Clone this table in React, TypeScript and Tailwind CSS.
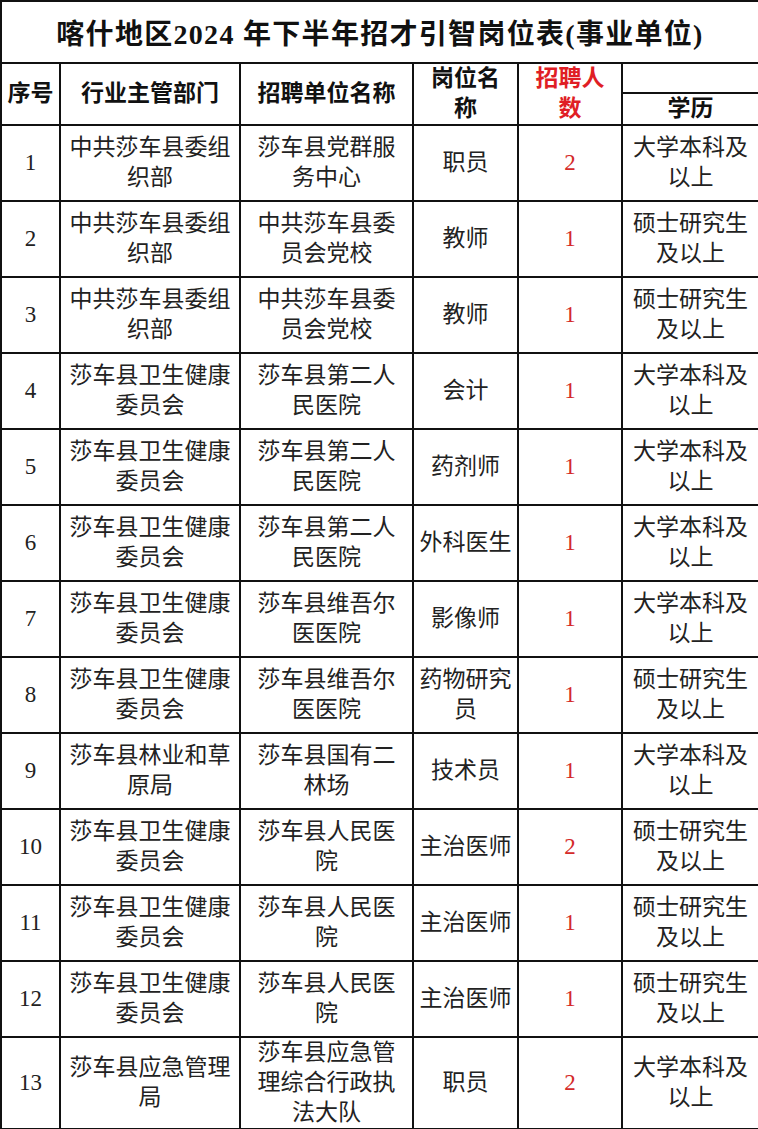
const rows: [string, string[], string[], string[], string, string[]][] = [
  ["1", ["中共莎车县委组", "织部"], ["莎车县党群服", "务中心"], ["职员"], "2", ["大学本科及", "以上"]],
  ["2", ["中共莎车县委组", "织部"], ["中共莎车县委", "员会党校"], ["教师"], "1", ["硕士研究生", "及以上"]],
  ["3", ["中共莎车县委组", "织部"], ["中共莎车县委", "员会党校"], ["教师"], "1", ["硕士研究生", "及以上"]],
  ["4", ["莎车县卫生健康", "委员会"], ["莎车县第二人", "民医院"], ["会计"], "1", ["大学本科及", "以上"]],
  ["5", ["莎车县卫生健康", "委员会"], ["莎车县第二人", "民医院"], ["药剂师"], "1", ["大学本科及", "以上"]],
  ["6", ["莎车县卫生健康", "委员会"], ["莎车县第二人", "民医院"], ["外科医生"], "1", ["大学本科及", "以上"]],
  ["7", ["莎车县卫生健康", "委员会"], ["莎车县维吾尔", "医医院"], ["影像师"], "1", ["大学本科及", "以上"]],
  ["8", ["莎车县卫生健康", "委员会"], ["莎车县维吾尔", "医医院"], ["药物研究", "员"], "1", ["硕士研究生", "及以上"]],
  ["9", ["莎车县林业和草", "原局"], ["莎车县国有二", "林场"], ["技术员"], "1", ["大学本科及", "以上"]],
  ["10", ["莎车县卫生健康", "委员会"], ["莎车县人民医", "院"], ["主治医师"], "2", ["硕士研究生", "及以上"]],
  ["11", ["莎车县卫生健康", "委员会"], ["莎车县人民医", "院"], ["主治医师"], "1", ["硕士研究生", "及以上"]],
  ["12", ["莎车县卫生健康", "委员会"], ["莎车县人民医", "院"], ["主治医师"], "1", ["硕士研究生", "及以上"]],
  ["13", ["莎车县应急管理", "局"], ["莎车县应急管", "理综合行政执", "法大队"], ["职员"], "2", ["大学本科及", "以上"]],
];

const Lines = ({ lines }: { lines: string[] }) => (
  <>
    {lines.map((l, i) => (
      <div key={i} className="whitespace-nowrap">
        {l}
      </div>
    ))}
  </>
);

const cell = "border-2 border-[#111] text-center align-middle p-0";

export default function App() {
  return (
    <div className="w-[758px] bg-white font-['Liberation_Serif','Noto_Sans_CJK_SC',serif] text-[#222]">
      <table className="w-[758px] table-fixed border-collapse">
        <colgroup>
          <col className="w-[59px]" />
          <col className="w-[180px]" />
          <col className="w-[173px]" />
          <col className="w-[105px]" />
          <col className="w-[104px]" />
          <col className="w-[137px]" />
        </colgroup>
        <tbody>
          <tr className="h-[62px]">
            <td
              colSpan={6}
              className={`${cell} whitespace-pre pt-[5px] text-[28px] font-bold leading-[30px] tracking-[1.3px] text-[#111]`}
            >
              喀什地区2024 年下半年招才引智岗位表(事业单位)
            </td>
          </tr>
          <tr className="h-[29px]">
            <td rowSpan={2} className={`${cell} text-[23px] font-bold leading-[30px] text-[#111]`}>序号</td>
            <td rowSpan={2} className={`${cell} text-[23px] font-bold leading-[30px] text-[#111]`}>行业主管部门</td>
            <td rowSpan={2} className={`${cell} text-[23px] font-bold leading-[30px] text-[#111]`}>招聘单位名称</td>
            <td rowSpan={2} className={`${cell} text-[23px] font-bold leading-[30px] text-[#111]`}>
              <Lines lines={["岗位名", "称"]} />
            </td>
            <td rowSpan={2} className={`${cell} text-[23px] font-bold leading-[30px] text-[#e01e25]`}>
              <Lines lines={["招聘人", "数"]} />
            </td>
            <td className={cell}></td>
          </tr>
          <tr className="h-[30px]">
            <td className={`${cell} text-[23px] font-bold leading-[28px] text-[#111]`}>学历</td>
          </tr>
          {rows.map(([no, dept, unit, post, count, edu]) => (
            <tr key={no} className={no === "13" ? "h-[92px]" : "h-[76px]"}>
              <td className={`${cell} text-[23px] leading-[30px]`}>{no}</td>
              <td className={`${cell} text-[23px] leading-[30px]`}>
                <Lines lines={dept} />
              </td>
              <td className={`${cell} text-[23px] leading-[30px]`}>
                <Lines lines={unit} />
              </td>
              <td className={`${cell} text-[23px] leading-[30px]`}>
                <Lines lines={post} />
              </td>
              <td className={`${cell} text-[23px] leading-[30px] text-[#d42a2a]`}>{count}</td>
              <td className={`${cell} text-[23px] leading-[30px]`}>
                <Lines lines={edu} />
              </td>
            </tr>
          ))}
        </tbody>
      </table>
    </div>
  );
}
